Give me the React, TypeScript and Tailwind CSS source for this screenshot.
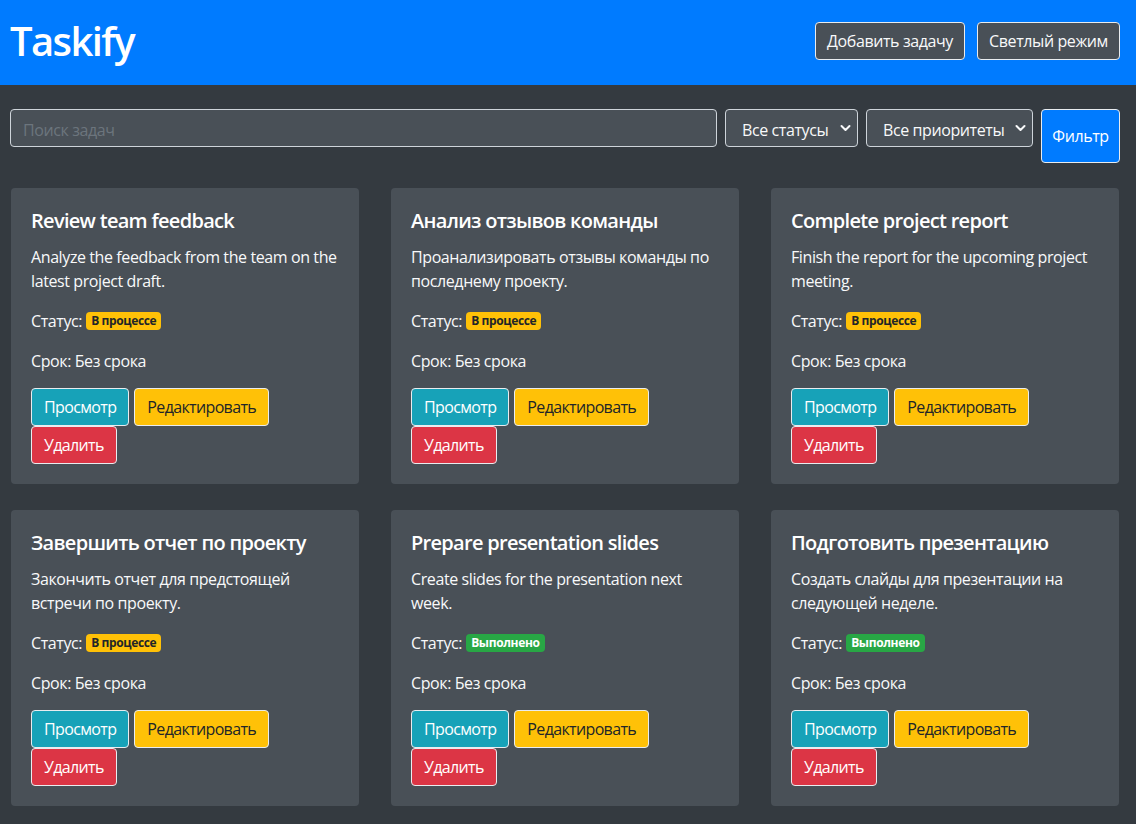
import React from 'react';

type Task = {
  title: string;
  desc: string;
  done: boolean;
};

const TASKS: Task[] = [
  { title: 'Review team feedback', desc: 'Analyze the feedback from the team on the latest project draft.', done: false },
  { title: 'Анализ отзывов команды', desc: 'Проанализировать отзывы команды по последнему проекту.', done: false },
  { title: 'Complete project report', desc: 'Finish the report for the upcoming project meeting.', done: false },
  { title: 'Завершить отчет по проекту', desc: 'Закончить отчет для предстоящей встречи по проекту.', done: false },
  { title: 'Prepare presentation slides', desc: 'Create slides for the presentation next week.', done: true },
  { title: 'Подготовить презентацию', desc: 'Создать слайды для презентации на следующей неделе.', done: true },
];

const Chevron = () => (
  <svg width="11" height="8" viewBox="0 0 11 8" className="absolute right-[6px] top-1/2 -translate-y-1/2">
    <path d="M1.5 2 L5.5 6 L9.5 2" fill="none" stroke="#f8f9fa" strokeWidth="2" strokeLinecap="round" strokeLinejoin="round" />
  </svg>
);

const TaskCard: React.FC<{ task: Task }> = ({ task }) => (
  <div className="bg-[#495057] rounded-[4px] px-5 pt-[21px] pb-5 text-[#f8f9fa] tracking-[-0.025em]">
    <h5 className="text-[20px] leading-[24px] font-semibold text-white mb-3 tracking-[-0.035em]">{task.title}</h5>
    <p className="text-[16px] leading-[24px] mb-4">{task.desc}</p>
    <p className="text-[16px] leading-[24px] mb-4 flex items-center">
      Статус:
      {task.done ? (
        <span className="ml-[4px] bg-[#28a745] text-white text-[12px] leading-[12px] font-bold px-[5px] py-[3px] rounded-[4px] tracking-[-0.03em]">Выполнено</span>
      ) : (
        <span className="ml-[4px] bg-[#ffc107] text-[#212529] text-[12px] leading-[12px] font-bold px-[5px] py-[3px] rounded-[4px] tracking-[-0.03em]">В процессе</span>
      )}
    </p>
    <p className="text-[16px] leading-[24px] mb-[15px]">Срок: Без срока</p>
    <div className="flex flex-wrap gap-x-[5px] tracking-[-0.04em]">
      <button className="h-[38px] px-3 bg-[#17a2b8] text-white border border-[#e9ecef] rounded-[4px] text-[16px]">Просмотр</button>
      <button className="h-[38px] px-3 bg-[#ffc107] text-[#212529] border border-[#e9ecef] rounded-[4px] text-[16px]">Редактировать</button>
      <button className="h-[38px] px-3 bg-[#dc3545] text-white border border-[#e9ecef] rounded-[4px] text-[16px]">Удалить</button>
    </div>
  </div>
);

export default function App() {
  return (
    <div className="min-h-screen bg-[#343a40] pb-[18px]" style={{ fontFamily: '"Segoe UI", "Open Sans", "Noto Sans", sans-serif' }}>
      <header className="h-[85px] bg-[#007bff] flex items-center justify-between pl-[10px] pr-[16px] pb-[4px]">
        <h1 className="text-[40px] leading-[48px] font-semibold text-white tracking-[-0.04em]">Taskify</h1>
        <div className="flex gap-3 tracking-[-0.025em]">
          <button className="h-[38px] w-[150px] bg-[#495057] text-[#f8f9fa] border border-[#e9ecef] rounded-[4px] text-[16px]">Добавить задачу</button>
          <button className="h-[38px] w-[143px] bg-[#495057] text-[#f8f9fa] border border-[#e9ecef] rounded-[4px] text-[16px]">Светлый режим</button>
        </div>
      </header>

      <div className="flex items-start gap-2 pl-[10px] pr-[16px] mt-6 tracking-[-0.025em]">
        <input
          placeholder="Поиск задач"
          className="flex-1 h-[38px] bg-[#495057] border border-[#ced4da] rounded-[4px] px-3 pt-[3px] text-[16px] text-[#f8f9fa] placeholder:text-[#6c757d] outline-none"
        />
        <div className="relative w-[133px] h-[38px] bg-[#495057] border border-[#ced4da] rounded-[4px] text-[16px] text-[#f8f9fa] flex items-center pl-4 pt-[3px]">
          Все статусы
          <Chevron />
        </div>
        <div className="relative w-[167px] h-[38px] bg-[#495057] border border-[#ced4da] rounded-[4px] text-[16px] text-[#f8f9fa] flex items-center pl-4 pt-[3px]">
          Все приоритеты
          <Chevron />
        </div>
        <button className="w-[79px] h-[54px] bg-[#007bff] text-white border border-[#e9ecef] rounded-[4px] text-[16px]">Фильтр</button>
      </div>

      <div className="grid grid-cols-[348px_348px_348px] gap-x-8 gap-y-[26px] pl-[11px] mt-[25px]">
        {TASKS.map((t, i) => (
          <TaskCard key={i} task={t} />
        ))}
      </div>
    </div>
  );
}
